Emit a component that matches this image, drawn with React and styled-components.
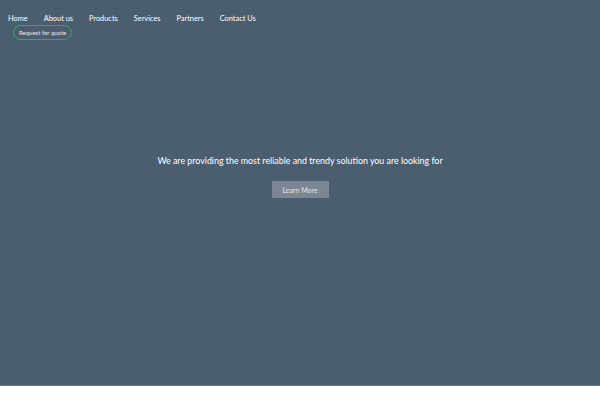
import React from 'react';
import styled, { createGlobalStyle } from 'styled-components';

const GlobalStyle = createGlobalStyle`
  body {
    margin: 0;
    background: #ffffff;
    font-family: Lato, "Noto Sans", sans-serif;
  }
`;

const Hero = styled.section`
  height: 385px;
  background: #4b5e70;
  border-bottom: 1px solid #6b7884;
  display: flex;
  flex-direction: column;
`;

const Header = styled.header`
  padding: 13px 8px 0;
  display: flex;
  flex-direction: column;
  align-items: flex-start;
`;

const Nav = styled.nav`
  display: flex;
  gap: 16px;
`;

const NavLink = styled.a`
  color: #ffffff;
  font-size: 7.4px;
  line-height: 11px;
  text-decoration: none;
`;

const QuoteButton = styled.a`
  margin: 1px 0 0 5px;
  padding: 0 5px;
  height: 13px;
  display: flex;
  align-items: center;
  border: 1.5px solid #2fb14f;
  border-radius: 8px;
  color: #e8ecef;
  font-size: 6px;
`;

const Center = styled.div`
  flex: 1;
  display: flex;
  flex-direction: column;
  align-items: center;
  padding-top: 115px;
`;

const Tagline = styled.h1`
  margin: 0;
  color: #ffffff;
  font-size: 8.85px;
  font-weight: 400;
  line-height: 12px;
`;

const LearnButton = styled.button`
  margin-top: 14px;
  width: 57px;
  height: 17px;
  border: none;
  background: #7c8793;
  color: #e2e6e9;
  font-family: inherit;
  font-size: 7px;
  padding: 0;
`;

const links = ['Home', 'About us', 'Products', 'Services', 'Partners', 'Contact Us'];

export default function App() {
  return (
    <>
      <GlobalStyle />
      <Hero>
        <Header>
          <Nav>
            {links.map(l => (
              <NavLink key={l}>{l}</NavLink>
            ))}
          </Nav>
          <QuoteButton>Request for quote</QuoteButton>
        </Header>
        <Center>
          <Tagline>We are providing the most reliable and trendy solution you are looking for</Tagline>
          <LearnButton>Learn More</LearnButton>
        </Center>
      </Hero>
    </>
  );
}
